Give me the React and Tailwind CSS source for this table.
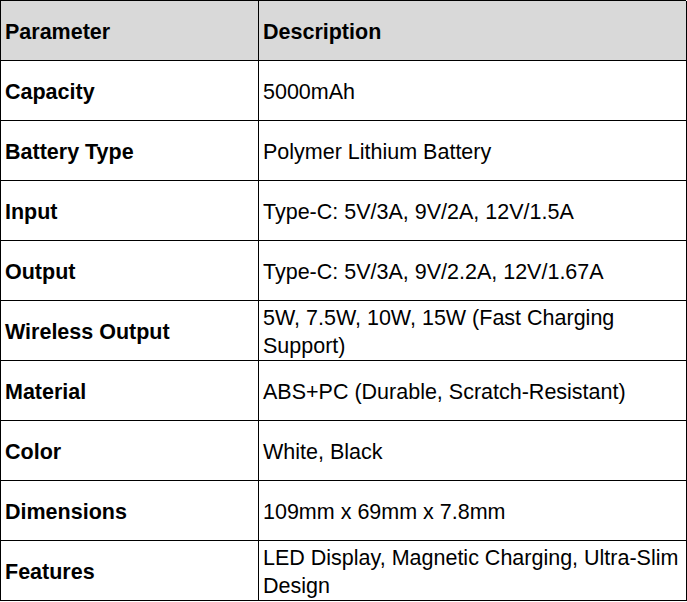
import React from 'react';

const rows = [
  ['Capacity', '5000mAh'],
  ['Battery Type', 'Polymer Lithium Battery'],
  ['Input', 'Type-C: 5V/3A, 9V/2A, 12V/1.5A'],
  ['Output', 'Type-C: 5V/3A, 9V/2.2A, 12V/1.67A'],
  ['Wireless Output', '5W, 7.5W, 10W, 15W (Fast Charging Support)'],
  ['Material', 'ABS+PC (Durable, Scratch-Resistant)'],
  ['Color', 'White, Black'],
  ['Dimensions', '109mm x 69mm x 7.8mm'],
  ['Features', 'LED Display, Magnetic Charging, Ultra-Slim Design'],
];

const App = () => {
  return (
    <div
      className="w-[687px] h-[602px] bg-white text-black text-[21.5px] leading-[28px]"
      style={{ fontFamily: '"Liberation Sans", Arial, sans-serif' }}
    >
      <div className="w-[686px] border-l border-t border-black grid grid-cols-[258px_428px]">
        <div className="h-[60px] border-r border-b border-black bg-[#d9d9d9] flex items-center px-1 pt-[2px] font-bold">
          Parameter
        </div>
        <div className="h-[60px] border-r border-b border-black bg-[#d9d9d9] flex items-center px-1 pt-[2px] font-bold">
          Description
        </div>
        {rows.map(([param, desc]) => (
          <React.Fragment key={param}>
            <div className="h-[60px] border-r border-b border-black flex items-center px-1 pt-[2px] font-bold">
              {param}
            </div>
            <div className="h-[60px] border-r border-b border-black flex items-center px-1 pt-[2px]">
              {desc}
            </div>
          </React.Fragment>
        ))}
      </div>
    </div>
  );
};

export default App;
